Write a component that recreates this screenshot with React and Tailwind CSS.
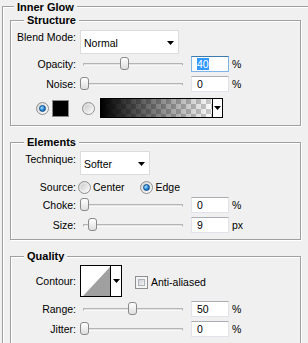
import React from 'react'

// Photoshop "Inner Glow" layer style panel, Vista-era look

function Arrow() {
  return (
    <svg width="7" height="4" viewBox="0 0 7 4" className="shrink-0">
      <path d="M0 0h7L3.5 4z" fill="#000" />
    </svg>
  )
}

function Group({ title, titleClass, className, children }) {
  return (
    <div className={`relative border border-[#a0a0a0] shadow-[1px_1px_0_#fff,inset_1px_1px_0_#fff] ${className}`}>
      <span className={`absolute bg-[#f0f0f0] px-[3px] text-[11px] font-bold leading-[13px] ${titleClass}`}>
        {title}
      </span>
      {children}
    </div>
  )
}

function Row({ label, top = false, labelPad = '', className = '', children }) {
  return (
    <div className={`flex ${top ? 'items-start' : 'h-[16px] items-center'} ${className}`}>
      <span className={`w-[65px] shrink-0 text-right leading-[12px] ${labelPad}`}>{label}</span>
      <div className="ml-[4px] flex items-center">{children}</div>
    </div>
  )
}

function Dropdown({ value, width }) {
  return (
    <div className={`flex h-[24px] items-center justify-between border border-[#dcdcdc] bg-white pl-[3px] pr-[4px] pt-[2px] ${width}`}>
      <span className="leading-[12px]">{value}</span>
      <Arrow />
    </div>
  )
}

function Slider({ pos }) {
  return (
    <div className="relative h-[16px] w-[106px] shrink-0">
      <div className="absolute left-[3px] right-[3px] top-[7px] h-[3px] border border-[#b4b4b4] border-b-[#f8f8f8] bg-[#e4e4e4]" />
      <div
        className="absolute top-[1px] h-[13px] w-[9px] rounded-[3px] border border-[#8a8a8a] bg-linear-to-b from-white to-[#dedede]"
        style={{ left: pos }}
      />
    </div>
  )
}

function NumberBox({ value, selected }) {
  return (
    <div
      className={`ml-[5px] flex h-[16px] w-[38px] items-center border bg-white pl-[5px] ${
        selected ? 'border-[#7eb4ea] border-t-[#3d7bad]' : 'border-[#e2e3ea] border-t-[#abadb3]'
      }`}
    >
      {selected ? (
        <span className="bg-[#3399ff] leading-[12px] text-white">{value}</span>
      ) : (
        <span className="leading-[12px]">{value}</span>
      )}
    </div>
  )
}

function SliderRow({ label, pos, value, unit = '%', selected = false, className = '' }) {
  return (
    <Row label={label} className={className}>
      <Slider pos={pos} />
      <NumberBox value={value} selected={selected} />
      <span className="ml-[3px] leading-[12px]">{unit}</span>
    </Row>
  )
}

function Radio({ checked }) {
  return (
    <span className="flex h-[13px] w-[13px] shrink-0 items-center justify-center rounded-full border border-[#8e8f8f] bg-linear-to-br from-[#d6d6d6] to-[#fbfbfb]">
      {checked ? (
        <span className="h-[7px] w-[7px] rounded-full border border-[#0e4c86] bg-[radial-gradient(circle_at_35%_35%,#a6e0ff,#2586d6_55%,#0b4f95)]" />
      ) : (
        <span className="h-[7px] w-[7px] rounded-full bg-linear-to-br from-[#cdcdcd] to-[#f5f5f5]" />
      )}
    </span>
  )
}

function Checkbox() {
  return (
    <span className="flex h-[13px] w-[13px] shrink-0 border border-[#8f8f8f] bg-[#f4f4f4] p-[2px]">
      <span className="h-full w-full border border-[#aeb3b9] bg-linear-to-br from-[#cbcfd5] to-[#f6f6f6]" />
    </span>
  )
}

export default function App() {
  return (
    <div className="h-[343px] w-[308px] overflow-hidden bg-[#f0f0f0] pl-[2px] pt-[6px] font-['Liberation_Sans',Arial,sans-serif] text-[10.5px] text-black">
      <Group
        title="Inner Glow"
        titleClass="-top-[6px] left-[11px]"
        className="h-[400px] w-[330px] pl-[7px] pt-[13px]"
      >
        {/* ── Structure ───────────────────────── */}
        <Group title="Structure" titleClass="-top-[7px] left-[13px]" className="h-[106px] w-[291px]">
          <div className="flex flex-col">
            <Row label="Blend Mode:" top labelPad="pt-[1px]" className="mt-[9px]">
              <Dropdown value="Normal" width="w-[99px]" />
            </Row>
            <SliderRow label="Opacity:" pos={40} value="40" selected className="mt-[2px]" />
            <SliderRow label="Noise:" pos={0} value="0" className="mt-[4px]" />
            <div className="mt-[6px] flex h-[20px] items-center pl-[25px]">
              <Radio checked />
              <span className="ml-[3px] h-[17px] w-[17px] shrink-0 border border-[#8a8a8a] bg-black" />
              <span className="ml-[13px]">
                <Radio />
              </span>
              <div className="ml-[5px] flex h-[20px] w-[123px] shrink-0 border border-black">
                <div className="flex-1 bg-[conic-gradient(#cccccc_25%,#ffffff_0_50%,#cccccc_0_75%,#ffffff_0)] bg-[length:10px_10px]">
                  <div className="h-full w-full bg-linear-to-r from-black to-transparent" />
                </div>
                <div className="flex w-[10px] items-center justify-center border-l border-black bg-white">
                  <Arrow />
                </div>
              </div>
            </div>
          </div>
        </Group>

        {/* ── Elements ────────────────────────── */}
        <Group title="Elements" titleClass="-top-[7px] left-[13px]" className="mt-[16px] h-[98px] w-[291px]">
          <div className="flex flex-col">
            <Row label="Technique:" top labelPad="pt-[2px]" className="mt-[8px]">
              <Dropdown value="Softer" width="w-[70px]" />
            </Row>
            <Row label="Source:" className="mt-[4px]">
              <span className="-ml-[2px]">
                <Radio />
              </span>
              <span className="ml-[2px] leading-[12px]">Center</span>
              <span className="ml-[15px]">
                <Radio checked />
              </span>
              <span className="ml-[3px] leading-[12px]">Edge</span>
            </Row>
            <SliderRow label="Choke:" pos={0} value="0" className="mt-[2px]" />
            <SliderRow label="Size:" pos={8} value="9" unit="px" className="mt-[4px]" />
          </div>
        </Group>

        {/* ── Quality ─────────────────────────── */}
        <Group title="Quality" titleClass="-top-[7px] left-[13px]" className="mt-[16px] h-[120px] w-[291px]">
          <div className="flex flex-col">
            <div className="mt-[8px] flex items-center">
              <span className="w-[65px] shrink-0 text-right leading-[12px]">Contour:</span>
              <div className="ml-[4px] flex h-[32px] w-[42px] shrink-0 border border-black bg-white">
                <svg width="29" height="30" viewBox="0 0 29 30" className="shrink-0">
                  <path d="M2 30L29 1V30Z" fill="#a0a0a0" />
                </svg>
                <div className="flex flex-1 items-center justify-center border-l border-black">
                  <Arrow />
                </div>
              </div>
              <span className="ml-[13px] mt-[2px]">
                <Checkbox />
              </span>
              <span className="ml-[3px] mt-[2px] leading-[12px]">Anti-aliased</span>
            </div>
            <SliderRow label="Range:" pos={48} value="50" className="mt-[4px]" />
            <SliderRow label="Jitter:" pos={0} value="0" className="mt-[4px]" />
          </div>
        </Group>
      </Group>
    </div>
  )
}
